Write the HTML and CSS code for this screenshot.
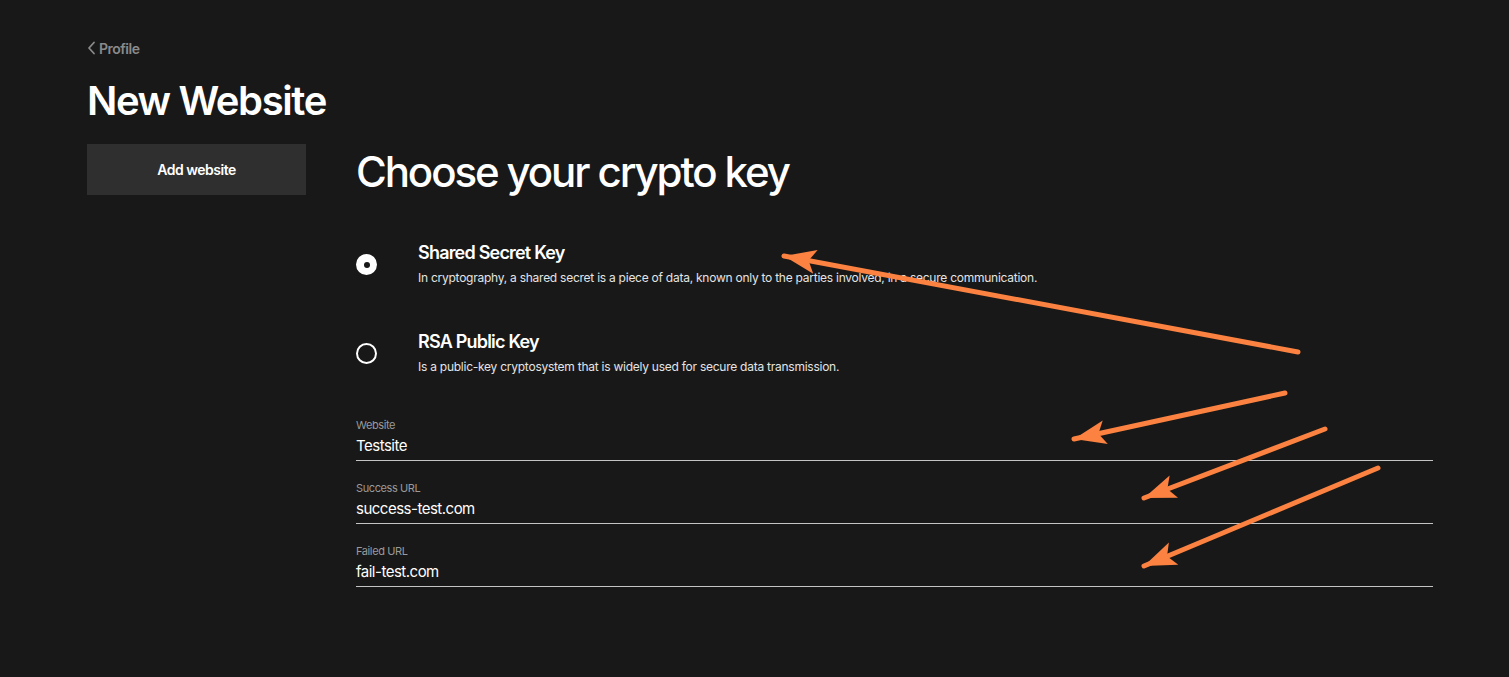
FILE: index.html
```html
<!DOCTYPE html>
<html lang="en">
<head>
<meta charset="utf-8">
<title>New Website</title>
<link rel="stylesheet" href="styles.css">
</head>
<body>
<div class="page">
  <a class="back" href="#">
    <svg class="back-icon" width="9" height="14" viewBox="0 0 9 14"><path d="M7 1.5 L2 7 L7 12.5" fill="none" stroke="currentColor" stroke-width="1.8" stroke-linecap="round" stroke-linejoin="round"/></svg>
    <span>Profile</span>
  </a>
  <h1 class="title">New Website</h1>
  <div class="layout">
    <aside class="sidebar">
      <button class="side-btn">Add website</button>
    </aside>
    <main class="main">
      <h2 class="heading">Choose your crypto key</h2>
      <div class="options">
        <label class="option">
          <span class="radio radio-checked"></span>
          <span class="option-text">
            <span class="option-title">Shared Secret Key</span>
            <span class="option-desc">In cryptography, a shared secret is a piece of data, known only to the parties involved, in a secure communication.</span>
          </span>
        </label>
        <label class="option">
          <span class="radio"></span>
          <span class="option-text">
            <span class="option-title">RSA Public Key</span>
            <span class="option-desc">Is a public-key cryptosystem that is widely used for secure data transmission.</span>
          </span>
        </label>
      </div>
      <div class="fields">
        <div class="field">
          <div class="field-label">Website</div>
          <div class="field-value">Testsite</div>
        </div>
        <div class="field">
          <div class="field-label">Success URL</div>
          <div class="field-value">success-test.com</div>
        </div>
        <div class="field">
          <div class="field-label">Failed URL</div>
          <div class="field-value">fail-test.com</div>
        </div>
      </div>
    </main>
  </div>
</div>
<svg class="annotations" width="1509" height="677" viewBox="0 0 1509 677">
  <defs>
    <marker id="ah" markerUnits="userSpaceOnUse" markerWidth="34" markerHeight="26" refX="32" refY="13" orient="auto">
      <path d="M32 13 L0 1 L7 13 L0 25 Z" fill="#fb8240"/>
    </marker>
  </defs>
  <g stroke="#fb8240" stroke-width="5" stroke-linecap="round" fill="none">
    <line x1="1298" y1="352" x2="784" y2="256" marker-end="url(#ah)"/>
    <line x1="1285" y1="393" x2="1074" y2="439" marker-end="url(#ah)"/>
    <line x1="1325" y1="429" x2="1144" y2="498" marker-end="url(#ah)"/>
    <line x1="1378" y1="468" x2="1144" y2="566" marker-end="url(#ah)"/>
  </g>
</svg>
</body>
</html>
```
FILE: styles.css
```css
* { box-sizing: border-box; }
html, body { margin: 0; padding: 0; }
body {
  background: #181818;
  color: #ffffff;
  font-family: Inter, "Noto Sans", "Liberation Sans", sans-serif;
  width: 1509px;
  height: 677px;
  overflow: hidden;
  position: relative;
}
.page {
  padding: 38px 76px 0 87px;
}
.back {
  display: flex;
  align-items: center;
  gap: 3px;
  height: 20px;
  color: #8a8a8a;
  text-decoration: none;
  font-size: 14px;
  font-weight: 600;
  letter-spacing: -0.5px;
}
.back-icon { display: block; }
.title {
  margin: 19px 0 0;
  font-size: 40px;
  line-height: 48px;
  font-weight: 600;
  letter-spacing: -1.4px;
}
.layout {
  margin-top: 19px;
  display: flex;
  gap: 50px;
}
.sidebar {
  width: 219px;
  flex: none;
}
.side-btn {
  width: 100%;
  height: 51px;
  border: 0;
  background: #2f2f2f;
  color: #ffffff;
  font-family: inherit;
  font-size: 14px;
  font-weight: 600;
  letter-spacing: -0.5px;
  padding: 0;
}
.main {
  flex: 1;
  min-width: 0;
}
.heading {
  margin: 2px 0 0;
  font-size: 42px;
  line-height: 52px;
  font-weight: 500;
  letter-spacing: -2.1px;
}
.options {
  margin-top: 43px;
  display: flex;
  flex-direction: column;
  gap: 42px;
}
.option {
  display: flex;
  align-items: center;
  gap: 41px;
}
.radio {
  width: 21px;
  height: 21px;
  border-radius: 50%;
  border: 2px solid #ffffff;
  flex: none;
  position: relative;
}
.radio-checked {
  background: #ffffff;
}
.radio-checked::after {
  content: "";
  position: absolute;
  left: 50%;
  top: 50%;
  width: 6px;
  height: 6px;
  margin: -3px 0 0 -3px;
  border-radius: 50%;
  background: #181818;
}
.option-text {
  display: flex;
  flex-direction: column;
}
.option-title {
  font-size: 18px;
  line-height: 24px;
  font-weight: 600;
  letter-spacing: -0.8px;
}
.option-desc {
  margin-top: 3px;
  font-size: 12px;
  line-height: 20px;
  color: #e4e4e4;
  letter-spacing: -0.25px;
}
.fields {
  margin-top: 41px;
  display: flex;
  flex-direction: column;
  gap: 20px;
}
.field {
  border-bottom: 1px solid #c4c4c4;
  padding-bottom: 4px;
}
.field-label {
  font-size: 11px;
  line-height: 14px;
  color: #9a9a9a;
  letter-spacing: -0.4px;
}
.field-value {
  margin-top: 4px;
  font-size: 15px;
  line-height: 20px;
  color: #ffffff;
  letter-spacing: -0.5px;
}
.annotations {
  position: absolute;
  left: 0;
  top: 0;
  pointer-events: none;
}
```
